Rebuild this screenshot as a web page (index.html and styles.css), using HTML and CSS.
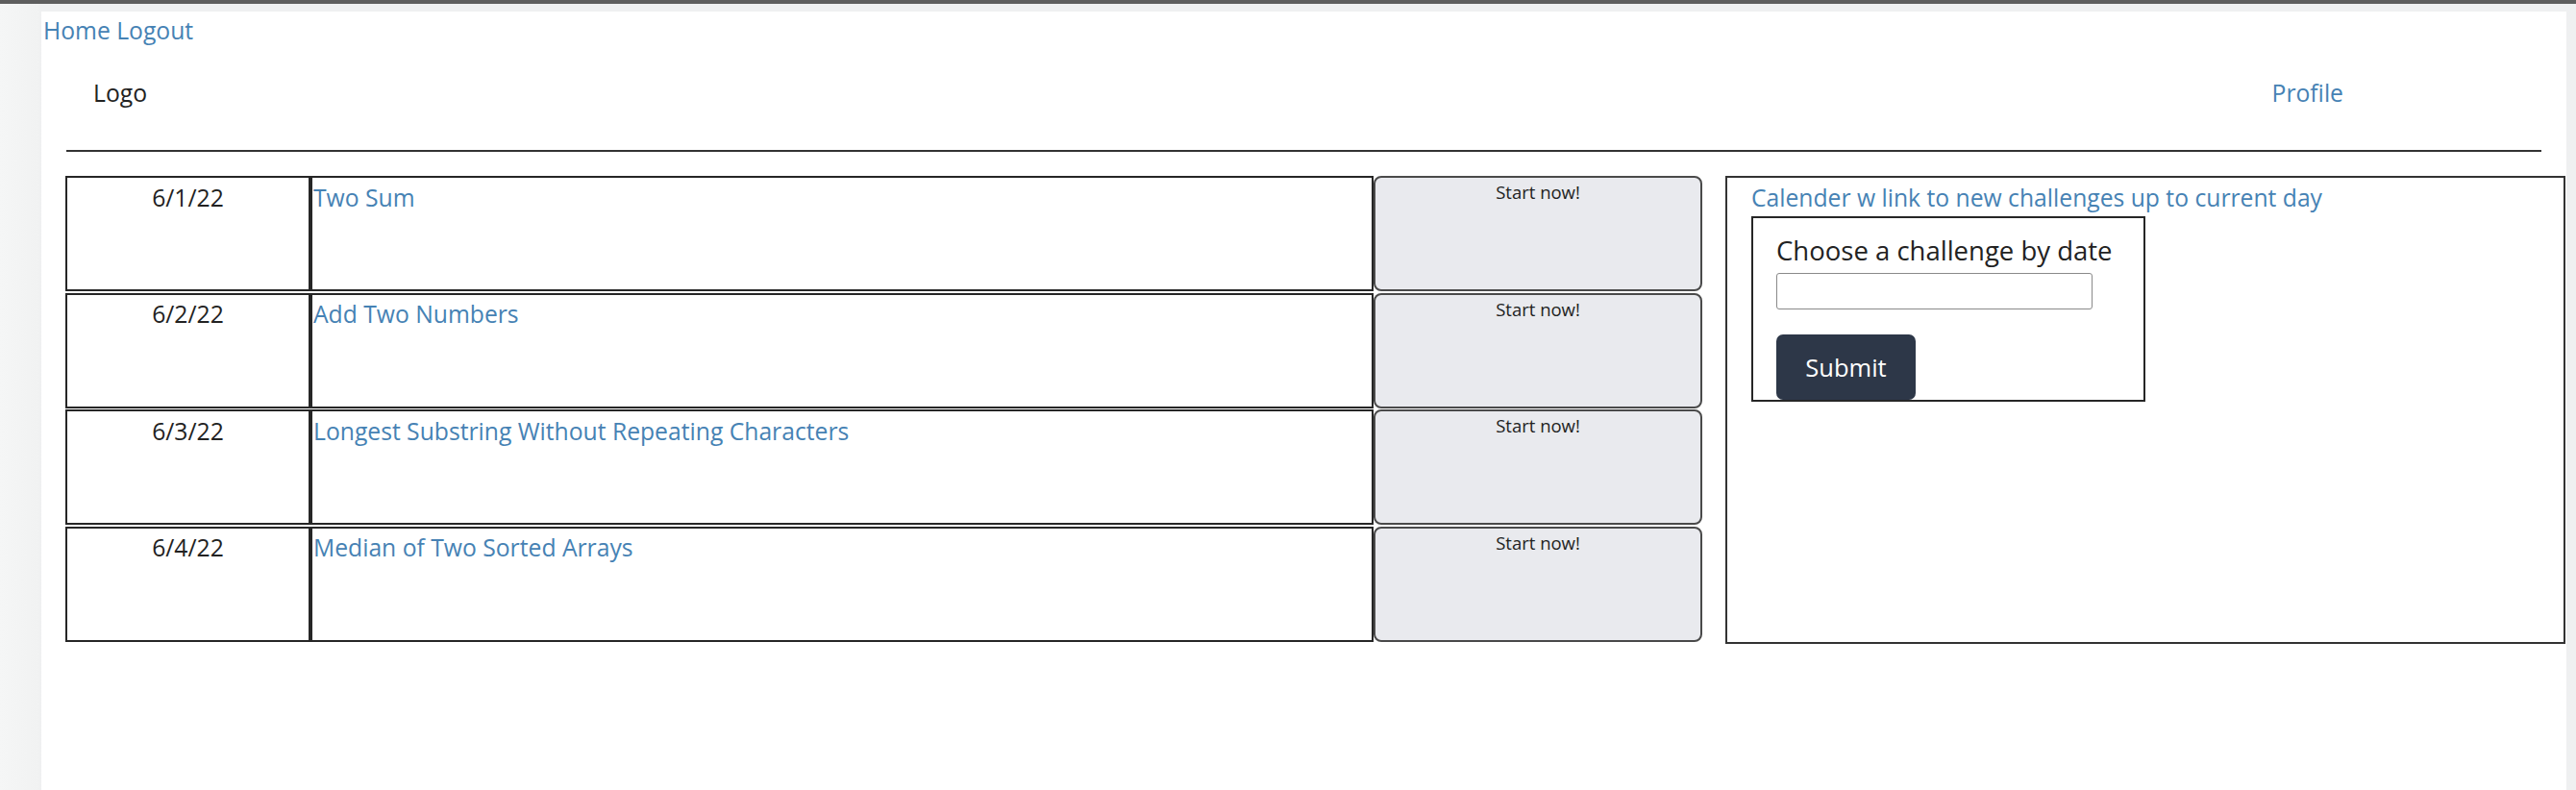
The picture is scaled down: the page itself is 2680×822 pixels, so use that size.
FILE: index.html
```html
<!DOCTYPE html>
<html lang="en">
<head>
<meta charset="utf-8">
<title>Challenges</title>
<link rel="stylesheet" href="styles.css">
</head>
<body>
<div class="topbar"></div>
<div class="frame">
  <div class="page">
    <nav class="nav"><a href="#" class="link">Home</a> <a href="#" class="link">Logout</a></nav>
    <header class="header">
      <span class="logo">Logo</span>
      <a href="#" class="link">Profile</a>
    </header>
    <hr class="rule">
    <main class="main">
      <section class="challenges">
        <div class="row">
          <div class="date">6/1/22</div>
          <div class="title"><a href="#" class="link">Two Sum</a></div>
          <button class="start" type="button"><span>Start now!</span></button>
        </div>
        <div class="row">
          <div class="date">6/2/22</div>
          <div class="title"><a href="#" class="link">Add Two Numbers</a></div>
          <button class="start" type="button"><span>Start now!</span></button>
        </div>
        <div class="row">
          <div class="date">6/3/22</div>
          <div class="title"><a href="#" class="link">Longest Substring Without Repeating Characters</a></div>
          <button class="start" type="button"><span>Start now!</span></button>
        </div>
        <div class="row">
          <div class="date">6/4/22</div>
          <div class="title"><a href="#" class="link">Median of Two Sorted Arrays</a></div>
          <button class="start" type="button"><span>Start now!</span></button>
        </div>
      </section>
      <aside class="panel">
        <a href="#" class="link cal-link">Calender w link to new challenges up to current day</a>
        <form class="picker">
          <label class="picker-label" for="date">Choose a challenge by date</label>
          <input class="picker-input" id="date" type="text">
          <button class="submit" type="button">Submit</button>
        </form>
      </aside>
    </main>
  </div>
</div>
</body>
</html>
```
FILE: styles.css
```css
* { box-sizing: border-box; }

html, body {
  margin: 0;
  padding: 0;
  height: 100%;
}

body {
  background: #f3f4f4;
  font-family: "Open Sans", "Noto Sans", sans-serif;
  font-size: 24.7px;
  line-height: 34px;
  color: #222;
  overflow: hidden;
}

.topbar {
  height: 4px;
  background: #5e5e5e;
}

.frame {
  display: flex;
  padding: 8px 10px 0 43px;
  background: linear-gradient(to right, #f5f6f6 0, #f1f2f2 40px, #eff0f1 43px);
  height: calc(100% - 4px);
}

.page {
  flex: 1;
  background: #fff;
  min-height: 810px;
}

.link {
  color: #4682b4;
  text-decoration: none;
}

.nav {
  padding: 3px 0 0 2px;
}

.header {
  display: flex;
  justify-content: space-between;
  padding: 31px 232px 0 54px;
}

.logo {
  color: #222;
}

.rule {
  margin: 42px 26px 0 26px;
  border: 0;
  border-top: 2px solid #333;
  height: 0;
}

.main {
  display: grid;
  grid-template-columns: 1703px 874px;
  column-gap: 24px;
  align-items: start;
  margin-top: 25px;
  padding-left: 25px;
}

.challenges {
  display: flex;
  flex-direction: column;
  gap: 1.5px;
}

.row {
  display: flex;
  height: 120px;
}

.date {
  flex: 0 0 255px;
  border: 2px solid #262626;
  padding-top: 3.5px;
  text-align: center;
}

.title {
  flex: 0 0 1106px;
  border: 2px solid #262626;
  padding: 3.5px 0 0 1px;
}

.start {
  flex: 0 0 342px;
  display: flex;
  justify-content: center;
  align-items: flex-start;
  margin: 0;
  padding: 2px 0 0 0;
  border: 2px solid #4a4a4a;
  border-radius: 8px;
  background: #e9eaee;
  font-family: "Open Sans", "Noto Sans", sans-serif;
  font-size: 18.5px;
  line-height: 25px;
  color: #222;
}

.panel {
  height: 487px;
  border: 2px solid #333;
  padding: 3.5px 25px 0 25px;
}

.cal-link {
  display: block;
}

.picker {
  display: flex;
  flex-direction: column;
  align-items: flex-start;
  width: 410px;
  height: 193px;
  margin-top: 2.5px;
  border: 2px solid #262626;
  padding: 16px 0 0 24px;
}

.picker-label {
  font-size: 27.5px;
  line-height: 36px;
  color: #222;
}

.picker-input {
  width: 329px;
  height: 38px;
  margin: 5px 0 0 0;
  border: 1.5px solid #8a8a8a;
  border-radius: 3px;
  background: #fff;
  font: inherit;
}

.submit {
  width: 145px;
  height: 68px;
  margin-top: 26px;
  border: 0;
  border-radius: 7px;
  background: #2d3748;
  color: #fff;
  font-family: "Open Sans", "Noto Sans", sans-serif;
  font-size: 25.5px;
}
```
